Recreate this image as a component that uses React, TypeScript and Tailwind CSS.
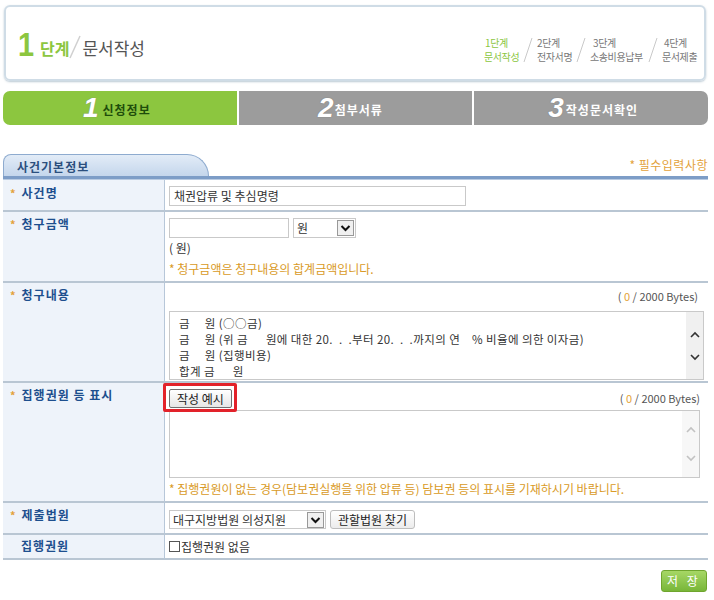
import React from "react";

const Star = () => <span className="text-[#e3a23a] mr-[5px] text-[11px]">*</span>;
const NoStar = () => <span className="inline-block w-[11px]" />;

function StepSlash() {
  return (
    <svg width="12" height="28" viewBox="0 0 12 28" className="mx-[3px]">
      <line x1="10" y1="2" x2="2" y2="26" stroke="#c9c9c9" strokeWidth="1" />
    </svg>
  );
}

function Arrow({ light = false }: { light?: boolean }) {
  return (
    <svg width="12" height="8" viewBox="0 0 12 8">
      <path d="M2 2 L6 6 L10 2" fill="none" stroke={light ? "#c2c2c2" : "#333"} strokeWidth="1.6" />
    </svg>
  );
}

function UpArrow({ light = false }: { light?: boolean }) {
  return (
    <svg width="12" height="8" viewBox="0 0 12 8">
      <path d="M2 6 L6 2 L10 6" fill="none" stroke={light ? "#c2c2c2" : "#333"} strokeWidth="1.6" />
    </svg>
  );
}

function SelectArrowBox() {
  return (
    <div className="w-[17px] h-[16px] border border-[#999] bg-[#f0f0f0] flex items-center justify-center">
      <svg width="11" height="8" viewBox="0 0 11 8">
        <path d="M1.5 2 L5.5 6 L9.5 2" fill="none" stroke="#111" strokeWidth="2" />
      </svg>
    </div>
  );
}

export default function App() {
  return (
    <div
      className="w-[714px] h-[600px] bg-white text-[12px] text-[#333] relative overflow-hidden"
      style={{ fontFamily: '"Noto Sans CJK KR", "Noto Sans", sans-serif' }}
    >
      {/* header */}
      <div className="pt-[5px] pl-[4px] pr-[8px]">
        <div className="h-[76px] border-2 border-[#cfdce6] rounded-[6px] shadow-[0_1px_2px_rgba(120,150,170,0.5)] flex items-center justify-between pl-[12px] pr-[6px]">
          <div className="flex items-end pt-[2px]">
            <span className="text-[34px] leading-[32px] font-bold text-[#8cc63f] scale-x-[0.85] origin-left inline-block" style={{ fontFamily: '"Liberation Sans", sans-serif' }}>1</span>
            <span className="text-[16px] leading-[20px] font-bold text-[#8cc63f] ml-[3px] mb-[2px]">단계</span>
            <svg width="12" height="24" viewBox="0 0 12 24" className="mb-[1px]">
              <line x1="11" y1="1" x2="1" y2="23" stroke="#d0d0d0" strokeWidth="1.5" />
            </svg>
            <span className="text-[17px] leading-[20px] text-[#555] ml-[1px] mb-[2px]">문서작성</span>
          </div>
          <div className="flex items-center text-[10px] leading-[14px] pt-[14px] tracking-[-0.4px] whitespace-nowrap">
            <div className="text-[#8cc63f] flex flex-col w-[35px]"><span className="ml-[1px]">1단계</span><span>문서작성</span></div>
            <StepSlash />
            <div className="text-[#777] flex flex-col w-[35px]"><span>2단계</span><span>전자서명</span></div>
            <StepSlash />
            <div className="text-[#777] flex flex-col w-[54px]"><span className="ml-[3px]">3단계</span><span>소송비용납부</span></div>
            <StepSlash />
            <div className="text-[#777] flex flex-col w-[36px]"><span className="ml-[2px]">4단계</span><span>문서제출</span></div>
          </div>
        </div>
      </div>

      {/* tab bar */}
      <div className="mt-[10px] pl-[3px] pr-[6px] grid grid-cols-3 gap-[2px] h-[34px]">
        <div className="bg-[#8cc63f] rounded-l-[7px] flex items-center justify-center pr-[6px]">
          <span className="text-[28px] leading-none font-bold italic text-white [text-shadow:0_0_1px_#777] mr-[4px]" style={{ fontFamily: '"Liberation Sans", sans-serif' }}>1</span>
          <span className="font-bold text-[12px] text-[#1e4d0b] tracking-[1px] mt-[3px]">신청정보</span>
        </div>
        <div className="bg-[#9c9c9c] flex items-center justify-center pr-[10px]">
          <span className="text-[28px] leading-none font-bold italic text-white [text-shadow:0_0_1px_#666] mr-[1px]" style={{ fontFamily: '"Liberation Sans", sans-serif' }}>2</span>
          <span className="font-bold text-[12px] text-white tracking-[1px] mt-[3px]">첨부서류</span>
        </div>
        <div className="bg-[#9c9c9c] rounded-r-[7px] flex items-center justify-center pl-[4px]">
          <span className="text-[28px] leading-none font-bold italic text-white [text-shadow:0_0_1px_#666] mr-[2px]" style={{ fontFamily: '"Liberation Sans", sans-serif' }}>3</span>
          <span className="font-bold text-[12px] text-white tracking-[1px] mt-[3px]">작성문서확인</span>
        </div>
      </div>

      {/* section tab */}
      <div className="mt-[29px] pl-[3px] pr-[6px] flex items-end justify-between h-[22px]">
        <div className="w-[206px] h-[22px] rounded-tl-[8px] rounded-tr-[22px] border border-b-0 border-[#8eabcf] bg-gradient-to-b from-[#e3ecf7] to-[#c4d6ec] pl-[13px] pt-[3px] font-bold text-[12px] text-[#2b4f7e] tracking-[1px]">
          사건기본정보
        </div>
        <div className="text-[#e3a23a] text-[12px] tracking-[0.5px] mb-[2px]">* 필수입력사항</div>
      </div>
      <div className="ml-[3px] mr-[6px] h-[4px] bg-[#7d9dc7] border-b border-[#b9cbe2]" />

      {/* table */}
      <div className="ml-[3px] mr-[6px] grid grid-cols-[162px_1fr] text-[12px]">
        {/* 사건명 */}
        <div className="bg-[#eef3fa] border-r border-[#b7c7d9] border-b-2 border-b-[#b9c6d3] pl-[7px] pt-[5px] leading-[16px] font-bold text-[#1d4f8e] tracking-[1px] h-[32px]">
          <Star />사건명
        </div>
        <div className="h-[32px] border-b-2 border-[#b9c6d3] pl-[4px] pt-[6px]">
          <div className="w-[297px] h-[20px] border border-[#c9c9c9] pl-[4px] leading-[18px] text-[#333]">채권압류 및 추심명령</div>
        </div>

        {/* 청구금액 */}
        <div className="bg-[#eef3fa] border-r border-[#b7c7d9] border-b-2 border-b-[#b9c6d3] pl-[7px] pt-[4px] leading-[16px] font-bold text-[#1d4f8e] tracking-[1px] h-[71px]">
          <Star />청구금액
        </div>
        <div className="h-[71px] border-b-2 border-[#b9c6d3] pl-[4px] pt-[6px]">
          <div className="flex gap-[4px]">
            <div className="w-[120px] h-[20px] border border-[#c9c9c9]" />
            <div className="w-[63px] h-[20px] border border-[#c9c9c9] flex items-center justify-between pl-[3px] pr-[1px]">
              <span className="leading-[18px]">원</span>
              <SelectArrowBox />
            </div>
          </div>
          <div className="mt-[2px] leading-[16px]">( 원)</div>
          <div className="mt-[5px] leading-[16px] text-[#d99a26]">* 청구금액은 청구내용의 합계금액입니다.</div>
        </div>

        {/* 청구내용 */}
        <div className="bg-[#eef3fa] border-r border-[#b7c7d9] border-b-2 border-b-[#b9c6d3] pl-[7px] pt-[4px] leading-[16px] font-bold text-[#1d4f8e] tracking-[1px] h-[100px]">
          <Star />청구내용
        </div>
        <div className="h-[100px] border-b-2 border-[#b9c6d3] pl-[4px] pr-[4px] pt-[5px]">
          <div className="text-right text-[11px] leading-[16px] pr-[6px] text-[#555]">( <span className="text-[#e3a23a]">0</span> / 2000 Bytes)</div>
          <div className="mt-[7px] h-[69px] border border-[#c9c9c9] flex">
            <div className="flex-1 pl-[9px] pt-[3px] text-[11.5px] tracking-[0.4px] leading-[16px] text-[#333] whitespace-pre">
              {"금     원 (○○금)\n금     원 (위 금      원에 대한 20.  .  .부터 20.  .  .까지의 연    % 비율에 의한 이자금)\n금     원 (집행비용)\n합계 금      원"}
            </div>
            <div className="w-[17px] bg-[#f0f0f0] flex flex-col items-center justify-center gap-[14px]">
              <UpArrow />
              <Arrow />
            </div>
          </div>
        </div>

        {/* 집행권원 등 표시 */}
        <div className="bg-[#eef3fa] border-r border-[#b7c7d9] border-b-2 border-b-[#b9c6d3] pl-[7px] pt-[4px] leading-[16px] font-bold text-[#1d4f8e] tracking-[1px] h-[120px]">
          <Star />집행권원 등 표시
        </div>
        <div className="h-[120px] border-b-2 border-[#b9c6d3] pl-[4px] pr-[6px] pt-[6px] relative">
          <div className="flex justify-between items-start">
            <div className="h-[19px] w-[63px] border border-[#707070] rounded-[2px] bg-gradient-to-b from-white to-[#e6e6e6] text-center leading-[17px] text-[12px] text-[#222]">작성 예시</div>
            <div className="text-right text-[11px] leading-[16px] text-[#555] mt-[1px] pr-[2px]">( <span className="text-[#e3a23a]">0</span> / 2000 Bytes)</div>
          </div>
          <div className="absolute left-[-2px] top-[0px] w-[74px] h-[29px] border-[3px] border-[#e2222a] rounded-[2px]" />
          <div className="mt-[2px] mr-[2px] h-[68px] border border-[#c9c9c9] flex">
            <div className="flex-1" />
            <div className="w-[17px] bg-[#f7f7f7] flex flex-col items-center justify-center gap-[20px]">
              <UpArrow light />
              <Arrow light />
            </div>
          </div>
          <div className="mt-[3px] leading-[16px] text-[#d99a26]">* 집행권원이 없는 경우(담보권실행을 위한 압류 등) 담보권 등의 표시를 기재하시기 바랍니다.</div>
        </div>

        {/* 제출법원 */}
        <div className="bg-[#eef3fa] border-r border-[#b7c7d9] border-b-2 border-b-[#b9c6d3] pl-[7px] pt-[4px] leading-[16px] font-bold text-[#1d4f8e] tracking-[1px] h-[32px]">
          <Star />제출법원
        </div>
        <div className="h-[32px] border-b-2 border-[#b9c6d3] pl-[4px] pt-[7px] flex items-start gap-[4px]">
          <div className="w-[157px] h-[19px] border border-[#c9c9c9] flex items-center justify-between pl-[3px] pr-[1px]">
            <span className="leading-[17px] text-[#333]">대구지방법원 의성지원</span>
            <SelectArrowBox />
          </div>
          <div className="h-[19px] px-[7px] border border-[#bdbdbd] rounded-[3px] bg-gradient-to-b from-white to-[#ececec] leading-[17px] text-[#222]">관할법원 찾기</div>
        </div>

        {/* 집행권원 */}
        <div className="bg-[#eef3fa] border-r border-[#b7c7d9] border-b-2 border-b-[#b9c6d3] pl-[7px] pt-[3px] leading-[16px] font-bold text-[#1d4f8e] tracking-[1px] h-[25px]">
          <NoStar />집행권원
        </div>
        <div className="h-[25px] border-b-2 border-[#b9c6d3] pl-[4px] flex items-center">
          <div className="w-[11px] h-[11px] border border-[#555] mr-[1px]" />
          <span className="text-[#333] leading-[16px]">집행권원 없음</span>
        </div>
      </div>

      {/* save */}
      <div className="flex justify-end pr-[7px] mt-[10px]">
        <div className="w-[46px] h-[22px] rounded-[3px] border border-[#6fa52e] bg-gradient-to-b from-[#a6d765] to-[#78b638] text-white text-[12px] leading-[20px] text-center tracking-[3px]">저 장</div>
      </div>
    </div>
  );
}
